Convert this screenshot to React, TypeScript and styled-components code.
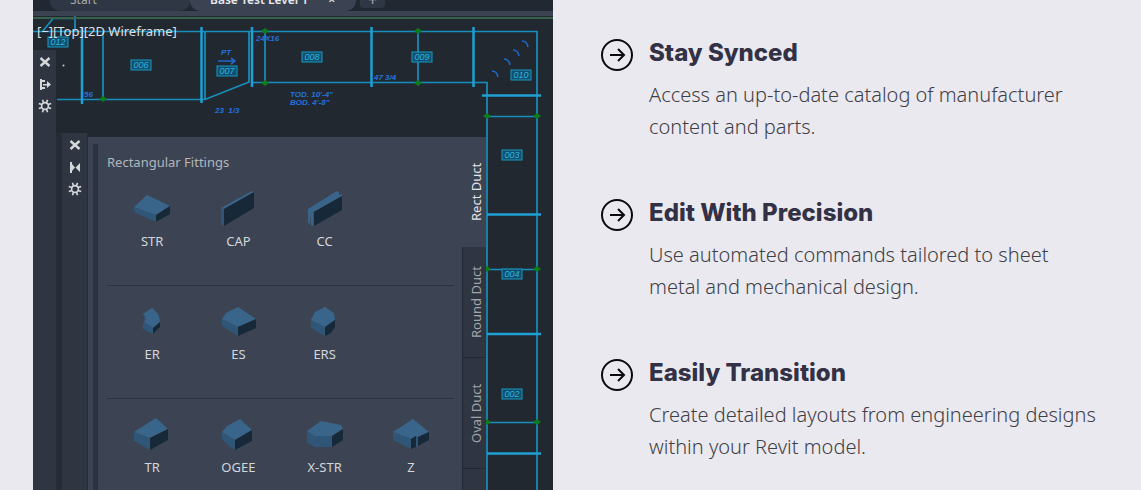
import React from 'react';
import styled, { createGlobalStyle } from 'styled-components';

const GlobalStyle = createGlobalStyle`
  *, *::before, *::after { box-sizing: border-box; }
  body {
    margin: 0;
    background: #eae9ef;
    font-family: 'Noto Sans', 'Open Sans', sans-serif;
  }
  button { font: inherit; color: inherit; border: 0; padding: 0; background: none; cursor: pointer; }
`;

const Section = styled.main`
  display: grid;
  grid-template-columns: minmax(0, 520px) minmax(0, 1fr);
  column-gap: 48px;
  height: 100vh;
  padding: 0 40px 0 33px;
  overflow: hidden;
`;

/* ---------- Application window ---------- */

const AppWindow = styled.div`
  display: flex;
  flex-direction: column;
  position: relative;
  overflow: hidden;
  background: #222830;
  color: #d3d6da;
  font-size: 13px;
`;

const Drawing = styled.svg`
  position: absolute;
  inset: 0;
  width: 100%;
  height: 100%;
`;

const TabBar = styled.div`
  display: flex;
  flex: none;
  height: 16px;
  padding-left: 17px;
  border-bottom: 5px solid #3b4352;
  background: #222831;
`;

const FileTab = styled.button<{ $active?: boolean }>`
  display: flex;
  align-items: flex-end;
  gap: 20px;
  height: 11px;
  padding: 0 16px 3px 20px;
  flex: 0 0 ${p => (p.$active ? '166px' : '140px')};
  border-radius: 0 0 10px 10px;
  background: ${p => (p.$active ? '#3b4352' : '#303744')};
  color: ${p => (p.$active ? '#e6e8ea' : '#a4a8af')};
  font-weight: ${p => (p.$active ? 600 : 400)};
  font-size: 12px;
  line-height: 16px;
  white-space: nowrap;
`;

const NewTab = styled.button`
  display: flex;
  align-items: flex-end;
  justify-content: center;
  width: 25px;
  height: 8px;
  margin-left: 4px;
  border-radius: 0 0 4px 4px;
  background: #303744;
  color: #a4a8af;
  font-size: 16px;
  line-height: 16px;
`;

const Canvas = styled.div`
  display: flex;
  flex: 1;
  flex-direction: column;
  position: relative;
  min-height: 0;
  margin-top: 1px;
  border-top: 2px solid #38614f;
`;

const ViewLabel = styled.div`
  padding-left: 4px;
  flex: none;
  height: 31px;
  line-height: 24px;
  color: #dde0e3;
  white-space: nowrap;
`;

const Workspace = styled.div`
  display: flex;
  flex: 1;
  align-items: stretch;
  min-height: 0;
`;

const ToolStrip = styled.div<{ $width: number; $bg: string }>`
  display: flex;
  flex: 0 0 ${p => p.$width}px;
  flex-direction: column;
  align-items: center;
  gap: 8px;
  padding-top: 5px;
  background: ${p => p.$bg};
`;

const ToolButton = styled.button`
  display: grid;
  width: 14px;
  height: 14px;
  color: #d5d8db;
  svg { width: 14px; height: 14px; }
`;

const Palette = styled.div`
  display: flex;
  flex: 1;
  min-width: 0;
  min-height: 0;
  margin: 83px 67px 0 0;
  border-left: 6px solid #262c36;
`;

const PaletteBody = styled.div`
  display: flex;
  flex: 1;
  min-width: 0;
  gap: 9px;
  margin-top: 4px;
  padding: 0 8px 0 5px;
  border-left: 1px solid #262c38;
  background: #3c4453;
`;

const ScrollTrack = styled.div`
  flex: 0 0 5px;
  margin-top: 7px;
  background: #2b3240;
`;

const FittingList = styled.div`
  flex: 1;
  min-width: 0;
  padding-top: 15px;
`;

const PaletteTitle = styled.h2`
  margin: 0;
  color: #b2b6bc;
  font-size: 13px;
  font-weight: 400;
  line-height: 21px;
`;

const FittingRow = styled.div`
  display: grid;
  grid-template-columns: repeat(4, minmax(0, 1fr));
  height: 113px;
  padding: 16px 0 0 2px;
  border-bottom: 1px solid #2c3442;
`;

const Fitting = styled.button`
  display: flex;
  flex-direction: column;
  align-items: center;
  align-self: start;
  gap: 3px;
  color: #d3d6da;
  line-height: 18px;
  white-space: nowrap;
  svg { width: 48px; height: 40px; }
`;

const SideTabs = styled.div`
  display: flex;
  flex: 0 0 24px;
  flex-direction: column;
  margin-top: 4px;
  background: #2f3541;
`;

const SideTab = styled.button<{ $active?: boolean }>`
  flex: 0 0 ${p => (p.$active ? 110 : 111)}px;
  padding-right: 3px;
  border: solid #222936;
  border-width: ${p => (p.$active ? '0' : '1px 1px 0 0')};
  background: ${p => (p.$active ? '#3c4453' : '#2f3541')};
  color: ${p => (p.$active ? '#e2e4e7' : '#a0a4ab')};
  line-height: 20px;
  writing-mode: vertical-rl;
  transform: rotate(180deg);
`;

const Close = () => (
  <svg viewBox="0 0 14 14" stroke="currentColor" strokeWidth="2.4" fill="none"><path d="M2.500 3l9 8M11.500 3l-9 8" /></svg>
);
const Dock = () => (
  <svg viewBox="0 0 14 14" fill="currentColor"><path d="M2 2h2v11H2zM4 3h3v2H4zM4 10h3v2H4zM5 7h4V4l4 3.500-4 3.500V8.500H5z" /></svg>
);
const Collapse = () => (
  <svg viewBox="0 0 14 14" fill="currentColor"><path d="M2 2h2v11H2zM4 4l3 3.500-3 3.500zM12 3v9L7.500 7.500z" /></svg>
);
const Gear = () => (
  <svg viewBox="0 0 14 14" fill="none" stroke="currentColor">
    <circle cx="7" cy="7" r="3.400" strokeWidth="1.600" />
    <path strokeWidth="1.600" d="M5.500 4L4.500 .8M8.500 4l1-3.200M5.500 10l-1 3.200M8.500 10l1 3.200M4 5.500L.8 4.500M4 8.500l-3.200 1M10 5.500l3.200-1M10 8.500l3.200 1" />
  </svg>
);

const Tools = ({ docked, ...rest }: { docked?: boolean; $width: number; $bg: string }) => (
  <ToolStrip {...rest}>
    <ToolButton aria-label="Close"><Close /></ToolButton>
    <ToolButton aria-label="Auto-hide">{docked ? <Dock /> : <Collapse />}</ToolButton>
    <ToolButton aria-label="Properties"><Gear /></ToolButton>
  </ToolStrip>
);

/* Each solid is drawn as lit top, mid-tone side and dark open end. */
type Shape = { name: string; top: string; side: string; dark: string[] };

const rows: Shape[][] = [
  [
    { name: 'STR', top: 'M6 18L19 6 42 17 28 26z', side: 'M6 18L28 26V33L6 23z', dark: ['M28 26L42 17V25L28 33z'] },
    { name: 'CAP', top: 'M7 19L38 2 40 3 10 20z', side: 'M7 19L10 20V37L7 35z', dark: ['M10 20L40 3V19L10 37z'] },
    { name: 'CC', top: 'M7 20L36 2 38 3V6L41 5V7L12 23V37L10 36V22L9 35 7 34z', side: 'M7 20L9 21V35L7 34zM10 22L13 23V37L10 36z', dark: ['M13 23L41 7V21L13 37z'] },
  ],
  [
    { name: 'ER', top: 'M15 12L24 6Q32 12 32 20L25 26 16 20Q20 16 15 12z', side: 'M15 12Q20 16 16 20L25 26V32L15 27V22L17 18z', dark: ['M25 26L32 20V25L25 32z'] },
    { name: 'ES', top: 'M8 17L12 11 24 5 42 17 24 25z', side: 'M8 17L24 25V34L8 24z', dark: ['M24 25L42 17V26L24 34z'] },
    { name: 'ERS', top: 'M10 18L14 10 24 5 33 11 34 18 24 25z', side: 'M10 18L24 25V34L10 26z', dark: ['M24 25L34 18V25L30 31 24 34z'] },
  ],
  [
    { name: 'TR', top: 'M6 17L28 3 40 14 22 23z', side: 'M6 17L22 23V35L6 26z', dark: ['M22 23L40 14V25L22 35z'] },
    { name: 'OGEE', top: 'M8 17L13 11 26 4 38 15 21 25z', side: 'M8 17L21 25V35L15 31 8 24z', dark: ['M21 25L38 15V26L21 35z'] },
    { name: 'X-STR', top: 'M6 16L20 6 40 10 42 14 31 21H14z', side: 'M6 16L14 21H31V32H14L6 28z', dark: ['M31 21L42 14V25L31 32z'] },
    { name: 'Z', top: 'M6 17L26 4 42 17 31 22 29 21 24 24z', side: 'M6 17L24 24V34L6 25zM29 21H31V32H29z', dark: ['M24 24L29 21V32L24 34z', 'M31 22L42 17V25L31 31z'] },
  ],
];

const ShapeIcon = ({ shape }: { shape: Shape }) => (
  <svg viewBox="0 0 48 40" aria-hidden="true">
    <path d={shape.side} fill="#2f5677" />
    <path d={shape.top} fill="#3a658a" />
    {shape.dark.map(d => <path key={d} d={d} fill="#172939" />)}
  </svg>
);

const tags: [number, number, string][] = [
  [58, 42, '012'], [141, 65, '006'], [227, 71, '007'], [312, 57, '008'], [422, 57, '009'],
  [521, 75, '010'], [512, 155, '003'], [512, 274, '004'], [512, 394, '002'],
];
const notes: [number, number, string][] = [
  [84, 97, '56'], [256, 41, '24X16'], [221, 55, 'PT'], [215, 113, '23  1/3'],
  [290, 97, 'TOD. 10\'-4"'], [290, 105, 'BOD. 4\'-8"'], [374, 80, '47 3/4'],
];
const nodes = [
  [103, 99], [265, 31], [265, 83], [418, 31], [418, 83], [487, 116], [537, 116],
  [487, 269], [537, 269], [487, 422], [537, 422],
];

const DuctDrawing = () => (
  <Drawing viewBox="33 0 520 490" preserveAspectRatio="xMinYMin slice" aria-hidden="true">
    <g fill="none" stroke="#178fbd" strokeWidth="1.700">
      <path d="M33 31.500H537V490M42 32L53 18.500H75M75 16V31M103 31V99M57 99.500H205L249 82V31M205 31V99" />
      <path d="M252 82.500H487V490M265 31V83M418 31V83M487 116.500H537M487 269.500H537M487 422.500H537" />
    </g>
    <g fill="none" stroke="#1ea0d4" strokeWidth="2.500">
      <path d="M82 27V104M201.500 27V103M252 27V87M371.500 27V87M473.500 27V87" />
      <path d="M482 95.500H541M487 214.500H541M487 334H541M487 453.500H541" />
    </g>
    <g fill="none" stroke="#2068c8" strokeWidth="1.600">
      <path d="M218 61H234M231 58L235 61 231 64" />
      <path d="M492 71Q497 71 498 77M504 59Q509 59 510 65M513 50Q518 50 519 56M522 41Q527 41 528 47" />
    </g>
    {nodes.map(([x, y]) => (
      <path key={`${x}-${y}`} d={`M${x - 4} ${y}L${x} ${y - 3} ${x + 4} ${y} ${x} ${y + 3}z`} fill="#0c7c1c" />
    ))}
    {tags.map(([x, y, label]) => (
      <g key={label}>
        <rect x={x - 10} y={y - 5} width="20" height="10" fill="#134f6c" stroke="#1799c4" />
        <text x={x} y={y + 3} textAnchor="middle" fill="#2bb6e2" fontSize="9" fontStyle="italic" fontFamily="Liberation Sans, sans-serif">{label}</text>
      </g>
    ))}
    {notes.map(([x, y, label]) => (
      <text key={label} x={x} y={y} fill="#2272dc" fontSize="8" fontWeight="700" fontStyle="italic" fontFamily="Liberation Sans, sans-serif" xmlSpace="preserve">{label}</text>
    ))}
    <circle cx="63.500" cy="65.500" r="1" fill="#c8ccd0" />
  </Drawing>
);

/* ---------- Feature list ---------- */

const Features = styled.ul`
  display: flex;
  flex-direction: column;
  gap: 54px;
  margin: 0;
  padding: 37px 0 0;
  list-style: none;
`;

const Feature = styled.li`
  display: grid;
  grid-template-columns: 32px minmax(0, 1fr);
  column-gap: 16px;
`;

const ArrowIcon = styled.svg`
  width: 32px;
  height: 32px;
  margin-top: 2px;
  fill: none;
  stroke: #0a0a0e;
  stroke-width: 2;
`;

const FeatureTitle = styled.h3`
  margin: 0 0 10px;
  color: #333145;
  font-family: Inter, 'Noto Sans', sans-serif;
  font-size: 24px;
  font-weight: 800;
  line-height: 32px;
`;

const FeatureText = styled.p`
  margin: 0;
  color: #3f3f46;
  font-size: 20px;
  font-weight: 300;
  line-height: 32px;
`;

const features = [
  { title: 'Stay Synced', text: 'Access an up-to-date catalog of manufacturer content and parts.' },
  { title: 'Edit With Precision', text: 'Use automated commands tailored to sheet metal and mechanical design.' },
  { title: 'Easily Transition', text: 'Create detailed layouts from engineering designs within your Revit model.' },
];

export default function App() {
  return (
    <>
      <GlobalStyle />
      <Section>
        <AppWindow>
          <DuctDrawing />
          <TabBar>
            <FileTab>Start</FileTab>
            <FileTab $active>Base Test Level 1 <span>×</span></FileTab>
            <NewTab aria-label="New tab">+</NewTab>
          </TabBar>
          <Canvas>
            <ViewLabel>[−][Top][2D Wireframe]</ViewLabel>
            <Workspace>
              <Tools docked $width={23} $bg="#2f3541" />
              <Palette>
                <Tools $width={25} $bg="#2f3541" />
                <PaletteBody>
                  <ScrollTrack />
                  <FittingList>
                    <PaletteTitle>Rectangular Fittings</PaletteTitle>
                    {rows.map((row, i) => (
                      <FittingRow key={i}>
                        {row.map(shape => (
                          <Fitting key={shape.name}>
                            <ShapeIcon shape={shape} />
                            {shape.name}
                          </Fitting>
                        ))}
                      </FittingRow>
                    ))}
                  </FittingList>
                </PaletteBody>
                <SideTabs>
                  <SideTab $active>Rect Duct</SideTab>
                  <SideTab>Round Duct</SideTab>
                  <SideTab>Oval Duct</SideTab>
                  <SideTab aria-label="More tabs" />
                </SideTabs>
              </Palette>
            </Workspace>
          </Canvas>
        </AppWindow>
        <Features>
          {features.map(({ title, text }) => (
            <Feature key={title}>
              <ArrowIcon viewBox="0 0 32 32" aria-hidden="true">
                <circle cx="16" cy="16" r="15" />
                <path d="M9 16H23M17 10L23 16 17 22" />
              </ArrowIcon>
              <div>
                <FeatureTitle>{title}</FeatureTitle>
                <FeatureText>{text}</FeatureText>
              </div>
            </Feature>
          ))}
        </Features>
      </Section>
    </>
  );
}
